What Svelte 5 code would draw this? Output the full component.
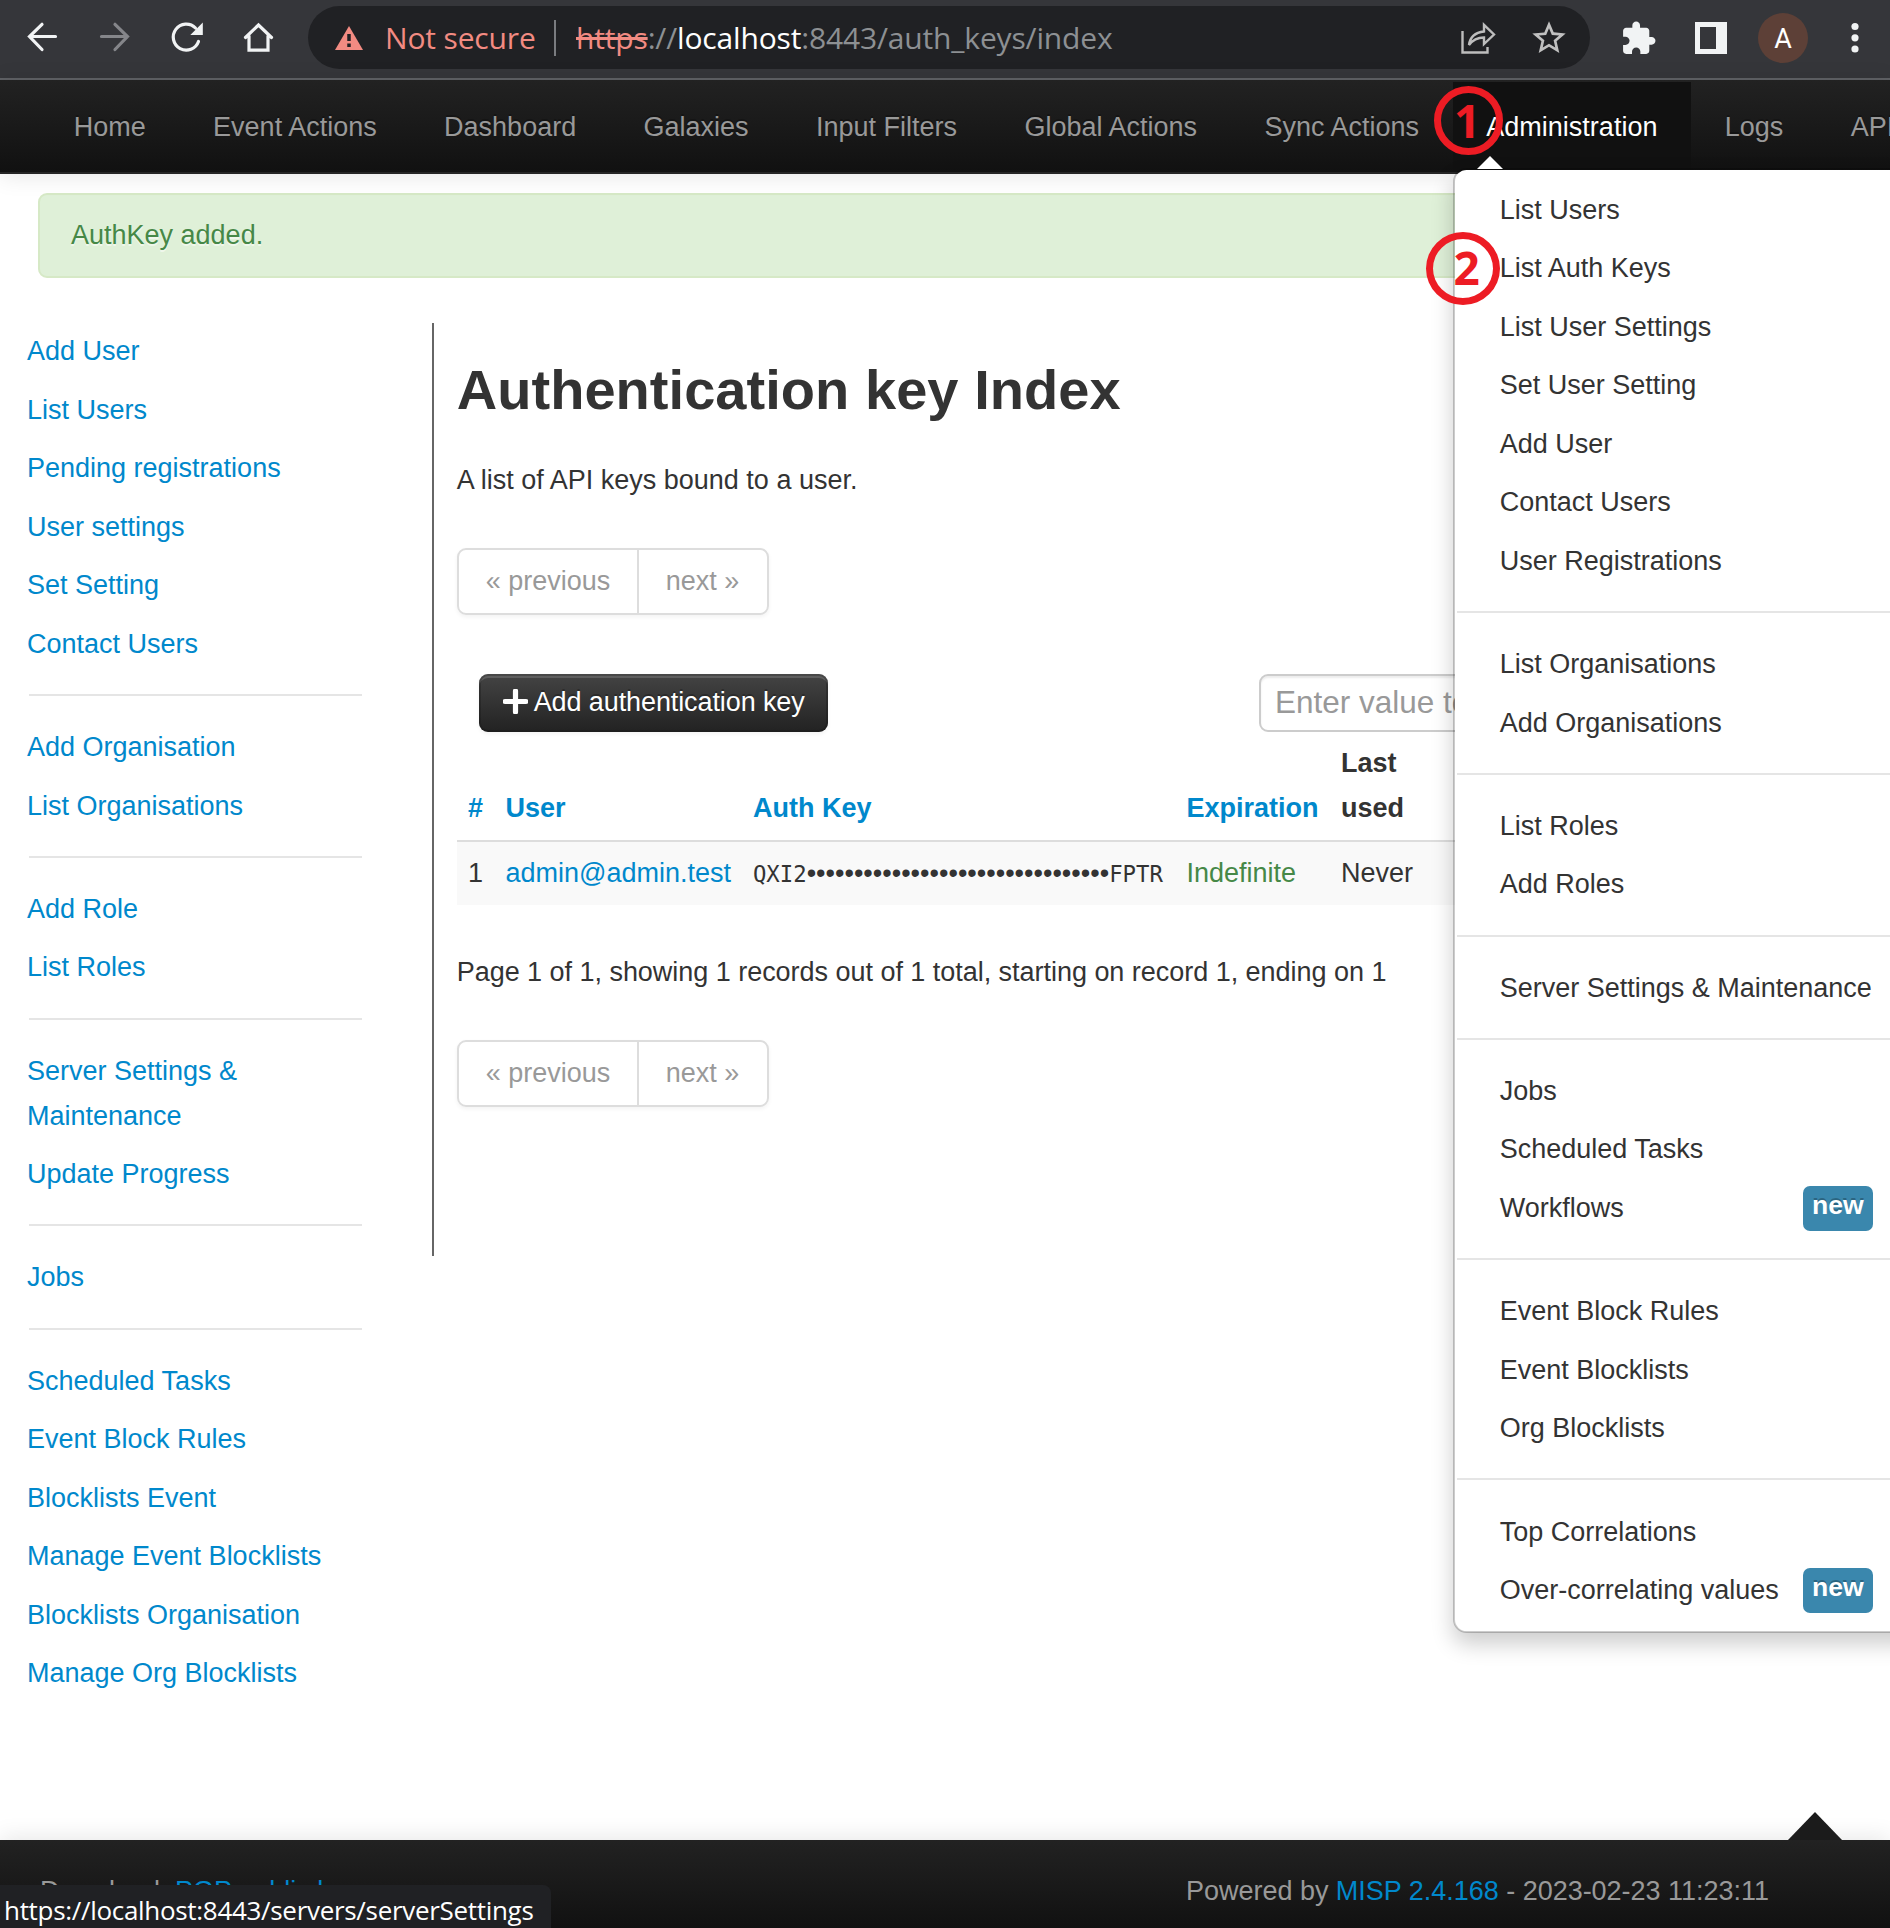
<script>
  const nav = ['Home', 'Event Actions', 'Dashboard', 'Galaxies', 'Input Filters', 'Global Actions', 'Sync Actions', 'Administration', 'Logs', 'API'];
  const menu = [
    ['List Users', 'List Auth Keys', 'List User Settings', 'Set User Setting', 'Add User', 'Contact Users', 'User Registrations'],
    ['List Organisations', 'Add Organisations'],
    ['List Roles', 'Add Roles'],
    ['Server Settings & Maintenance'],
    ['Jobs', 'Scheduled Tasks', 'Workflows'],
    ['Event Block Rules', 'Event Blocklists', 'Org Blocklists'],
    ['Top Correlations', 'Over-correlating values']
  ];
  const fresh = ['Workflows', 'Over-correlating values'];
  const side = [
    ['Add User', 'List Users', 'Pending registrations', 'User settings', 'Set Setting', 'Contact Users'],
    ['Add Organisation', 'List Organisations'],
    ['Add Role', 'List Roles'],
    ['Server Settings & Maintenance', 'Update Progress'],
    ['Jobs'],
    ['Scheduled Tasks', 'Event Block Rules', 'Blocklists Event', 'Manage Event Blocklists', 'Blocklists Organisation', 'Manage Org Blocklists']
  ];
  const dots = '•'.repeat(32);
</script>

{#snippet pager()}
  <div class="pager"><span>« previous</span><span>next »</span></div>
{/snippet}

<div class="window">
  <header class="chrome">
    <svg class="ctl" viewBox="0 0 280 76" fill="none" stroke="#f1f3f4" stroke-width="3.2" stroke-linecap="round">
      <path d="M55.500 36.500H29.500M42 24.300L29.500 36.500L42 49.500" />
      <path stroke="#85868a" d="M101.500 36.500h26M115 24.300L127.500 36.500L115 49.500" />
      <path d="M198.500 41.500A13 13 0 1 1 195.500 28" />
      <path fill="#f1f3f4" stroke="none" d="M202.800 22.500v12.500h-12.500z" />
      <path d="M245.500 37.500L258.500 25L271.500 37.500M249 36V50.200H268V36" />
    </svg>
    <div class="omnibox">
      <svg class="warn" viewBox="0 0 28 26"><path fill="#f28b82" d="M14 1L28 25H0z" /><path stroke="#202124" stroke-width="3.500" d="M14 9v7M14 18.500v3.500" /></svg>
      <span class="insecure">Not secure</span>
      <i class="bar"></i>
      <span class="url"><s>https</s>://<b>localhost</b>:8443/auth_keys/index</span>
      <svg class="share" viewBox="0 0 36 36" fill="none" stroke="#bdbdbd" stroke-width="2.400"><path d="M2.500 11V32.500H27.500V27" /><path d="M9 25C10 17 15 12.500 24 11.500V4.800L34 14.500L24 24V17.500C17 17.500 13 19.500 9 25z" /></svg>
      <svg class="star" viewBox="0 0 24 24" fill="#c0c0c0"><path d="M22 9.240l-7.190-.620L12 2 9.190 8.630 2 9.240l5.460 4.730L5.820 21 12 17.270 18.180 21l-1.630-7.030L22 9.240zM12 15.400l-3.760 2.270 1-4.280-3.320-2.880 4.380-.380L12 6.100l1.710 4.040 4.380.380-3.320 2.880 1 4.280L12 15.400z" /></svg>
    </div>
    <svg class="puzzle" viewBox="0 0 24 24" fill="#f1f3f4"><path d="M20.500 11H19V7c0-1.100-.900-2-2-2h-4V3.500C13 2.120 11.880 1 10.500 1S8 2.120 8 3.500V5H4c-1.100 0-1.990.900-1.990 2v3.800H3.500c1.490 0 2.700 1.210 2.700 2.700s-1.210 2.700-2.700 2.700H2V20c0 1.100.900 2 2 2h3.800v-1.500c0-1.490 1.210-2.700 2.700-2.700s2.700 1.210 2.700 2.700V22H17c1.100 0 2-.900 2-2v-4h1.500c1.380 0 2.500-1.120 2.500-2.500S21.880 11 20.500 11z" /></svg>
    <span class="panel"></span>
    <span class="avatar">A</span>
    <svg class="dots" viewBox="0 0 8 32" fill="#f1f3f4"><circle cx="4" cy="4.500" r="3.600" /><circle cx="4" cy="15.800" r="3.600" /><circle cx="4" cy="27" r="3.600" /></svg>
  </header>

  <nav class="navbar">
    {#each nav as item}
      {#if item === 'Administration'}
        <div class="tab active">
          {item}
          <ul class="dropdown">
            {#each menu as group, g}
              {#if g}<li class="divider"></li>{/if}
              {#each group as entry}
                <li class="entry"><span>{entry}</span>{#if fresh.includes(entry)}<em>new</em>{/if}</li>
              {/each}
            {/each}
          </ul>
          <span class="mark one">1</span>
          <span class="mark two">2</span>
        </div>
      {:else}
        <div class="tab">{item}</div>
      {/if}
    {/each}
  </nav>

  <div class="alert">AuthKey added.</div>

  <div class="body">
    <ul class="side">
      {#each side as group, g}
        {#if g}<li class="divider"></li>{/if}
        {#each group as entry}<li class="entry">{entry}</li>{/each}
      {/each}
    </ul>
    <main>
      <h2>Authentication key Index</h2>
      <p class="lead">A list of API keys bound to a user.</p>
      {@render pager()}
      <div class="tools">
        <button class="add"><svg viewBox="0 0 24 24"><path d="M12 2V22M2 12H22" stroke="#fff" stroke-width="5" stroke-linecap="round" /></svg>Add authentication key</button>
        <div class="filter">Enter value to search</div>
      </div>
      <div class="row head"><span>#</span><span>User</span><span>Auth Key</span><span>Expiration</span><span class="plain">Last<br />used</span></div>
      <div class="row data"><span>1</span><span class="link">admin@admin.test</span><span class="key"><code>QXI2</code>{dots}<code>FPTR</code></span><span class="green">Indefinite</span><span>Never</span></div>
      <p class="count">Page 1 of 1, showing 1 records out of 1 total, starting on record 1, ending on 1</p>
      {@render pager()}
    </main>
  </div>

  <footer>
    <span>Download: <a>PGP public key</a></span>
    <span class="powered">Powered by <a>MISP 2.4.168</a> - 2023-02-23 11:23:11</span>
    <i class="up"></i>
    <div class="status">https://localhost:8443/servers/serverSettings</div>
  </footer>
</div>

<style>
  :global(body) { background: #fff; }
  .window { height: 1928px; width: 1890px; position: relative; overflow: hidden; display: flex; flex-direction: column; font: 27px/45px "Liberation Sans", Arial, sans-serif; color: #333; box-sizing: border-box; }
  ul { list-style: none; margin: 0; padding: 0; }
  svg { display: block; flex: none; }
  .chrome { height: 80px; box-sizing: border-box; border-bottom: 2px solid #5f6165; background: #35363a; display: flex; align-items: center; flex: none; padding-bottom: 2px; }
  .ctl { width: 280px; height: 76px; margin-right: 28px; }
  .omnibox { width: 1282px; height: 63px; box-sizing: border-box; border-radius: 32px; background: #202124; display: flex; align-items: center; padding-left: 27px; margin-top: -1px; font-family: "Open Sans", "Noto Sans", sans-serif; font-size: 30px; color: #9aa0a6; white-space: nowrap; flex: none; }
  .warn { width: 28px; height: 26px; }
  .insecure { color: #f28b82; margin-left: 22px; width: 169px; letter-spacing: -.15px; }
  .bar { width: 2px; height: 36px; background: #7a7c80; margin-right: 20px; }
  .url { width: 884px; letter-spacing: -.16px; color: #8d9093; }
  .url s { color: #f28b82; }
  .url b { color: #fff; font-weight: 400; }
  .share { width: 36px; height: 36px; }
  .star { width: 40px; height: 40px; margin-left: 33px; }
  .puzzle { width: 37px; height: 37px; margin-left: 30px; }
  .panel { width: 32px; height: 32px; box-sizing: border-box; border: 5px solid #f1f3f4; border-right-width: 11px; margin-left: 38px; }
  .avatar { width: 50px; height: 50px; border-radius: 50%; background: #5d4037; color: #fff; font: 27px/52px Roboto, sans-serif; text-align: center; margin-left: 31px; }
  .dots { width: 8px; height: 32px; margin-left: 43px; }

  .navbar { height: 94px; box-sizing: border-box; flex: none; display: flex; padding: 2px 0 0 40px; background: linear-gradient(#222, #111); border-bottom: 2px solid #252525; box-shadow: 0 2px 22px rgba(0, 0, 0, .1); position: relative; z-index: 2; color: #999; white-space: nowrap; }
  .tab { height: 90px; box-sizing: border-box; padding: 23px 33.700px; text-shadow: 0 -2px 0 rgba(0, 0, 0, .25); flex: none; position: relative; }
  .active { background: #111; color: #fff; }
  .active::after { content: ""; position: absolute; left: 24px; top: 74px; border: 13px solid transparent; border-top: 0; border-bottom-color: #fff; }
  .dropdown { position: absolute; left: 0; top: 86px; width: 467px; box-sizing: border-box; padding: 11px 0 11.500px; background: #fff; background-clip: padding-box; border: 2px solid rgba(0, 0, 0, .2); border-radius: 13.500px; box-shadow: 0 11px 22px rgba(0, 0, 0, .2); color: #333; text-shadow: none; }
  .entry { padding: 6.750px 45px; display: flex; }
  .divider { height: 2px; margin: 20.500px 2px 22.300px; background: #e5e5e5; }
  .entry em { margin-left: auto; font: bold 26.600px/38px "Liberation Sans", Arial, sans-serif; height: 45px; background: #3a87ad; color: #fff; border-radius: 7px; padding: 0 9px; text-shadow: 0 -2px 0 rgba(0, 0, 0, .25); }
  .mark { position: absolute; box-sizing: border-box; border: 7px solid #ed1c24; border-radius: 50%; color: #ed1c24; font: 700 46px/57px "Open Sans", sans-serif; text-align: center; text-shadow: none; z-index: 3; }
  .one { width: 69px; height: 69px; left: -19px; top: 4px; padding-right: 2px; line-height: 54px; }
  .two { width: 74px; height: 73px; left: -27px; top: 150px; padding-left: 8px; }

  .alert { flex: none; margin: 19px 38px 0; height: 85px; box-sizing: border-box; border: 2px solid #d6e9c6; border-radius: 9px; background: #dff0d8; color: #468847; padding: 18px 31px; text-shadow: 0 2px 0 rgba(255, 255, 255, .5); }
  .body { flex: none; height: 1517px; margin-top: 45px; display: flex; }
  .side { width: 432px; box-sizing: border-box; padding-right: 70px; margin-top: -.500px; }
  .side .entry { padding: 6.750px 27px; color: #08c; }
  .side .divider { margin-left: 29px; margin-right: 0; }
  main { flex: 1; height: 933px; border-left: 2px solid #666; padding-left: 22.700px; min-width: 0; box-sizing: border-box; }
  h2 { font-size: 56px; line-height: 90px; margin: 22px 0 0; color: #333; letter-spacing: .05px; }
  .lead { margin: 23px 0 0; }
  .pager { display: flex; width: 312px; height: 67px; box-sizing: border-box; border: 2px solid #ddd; border-radius: 9px; box-shadow: 0 2px 4px rgba(0, 0, 0, .05); margin-top: 45px; color: #999; white-space: nowrap; }
  .pager span { padding: 9px 26.500px 0 27px; }
  .pager span + span { border-left: 2px solid #ddd; }
  .tools { display: flex; justify-content: space-between; margin-top: 59px; padding: 0 40px 0 22px; }
  .add { width: 349px; height: 58px; border: 0; border-radius: 9px; padding: 0 0 2px 24px; background: linear-gradient(#444, #222); box-shadow: inset 0 0 0 2px rgba(20, 20, 20, .3), inset 0 4px 0 rgba(255, 255, 255, .15), 0 2px 4px rgba(0, 0, 0, .05); color: #fff; font: inherit; letter-spacing: -.1px; display: flex; align-items: center; white-space: nowrap; text-shadow: 0 -2px 0 rgba(0, 0, 0, .25); }
  .add svg { width: 25px; height: 25px; margin: 0 6px 2px 0; }
  .filter { width: 591px; height: 58px; box-sizing: border-box; border: 2px solid #ccc; border-radius: 9px; box-shadow: inset 0 2px 2px rgba(0, 0, 0, .075); padding: 4px 14px; font-size: 31.500px; color: #999; }
  .row { display: grid; grid-template-columns: 37.500px 247.500px 433.500px 154.500px 1fr; }
  .row span { padding: 9px 11.250px; white-space: nowrap; }
  .head { align-items: end; color: #08c; font-weight: 700; border-bottom: 2px solid #ddd; }
  .row .plain { color: #333; }
  .data { background: #f9f9f9; }
  .link, a { color: #08c; }
  .green { color: #468847; }
  code { font: 22.300px "DejaVu Sans Mono", monospace; }
  .count { margin: 45px 0 0; letter-spacing: -.03px; }

  footer { flex: none; height: 88px; box-sizing: border-box; position: relative; padding: 29px 121px 0 40px; display: flex; justify-content: space-between; background: linear-gradient(#222, #111); box-shadow: 0 -2px 22px rgba(0, 0, 0, .1); color: #999; }
  .powered { letter-spacing: -.02px; }
  .up { position: absolute; left: 1788px; top: -28px; border: 27px solid transparent; border-top: 0; border-bottom: 28px solid #1b1b1b; }
  .status { position: absolute; left: 0; bottom: 0; width: 551px; height: 43px; box-sizing: border-box; padding-left: 4px; border-radius: 0 8px 0 0; background: #202124; color: #fff; font: 26px/50px "Open Sans", "Noto Sans", sans-serif; letter-spacing: -.31px; white-space: nowrap; }
</style>
